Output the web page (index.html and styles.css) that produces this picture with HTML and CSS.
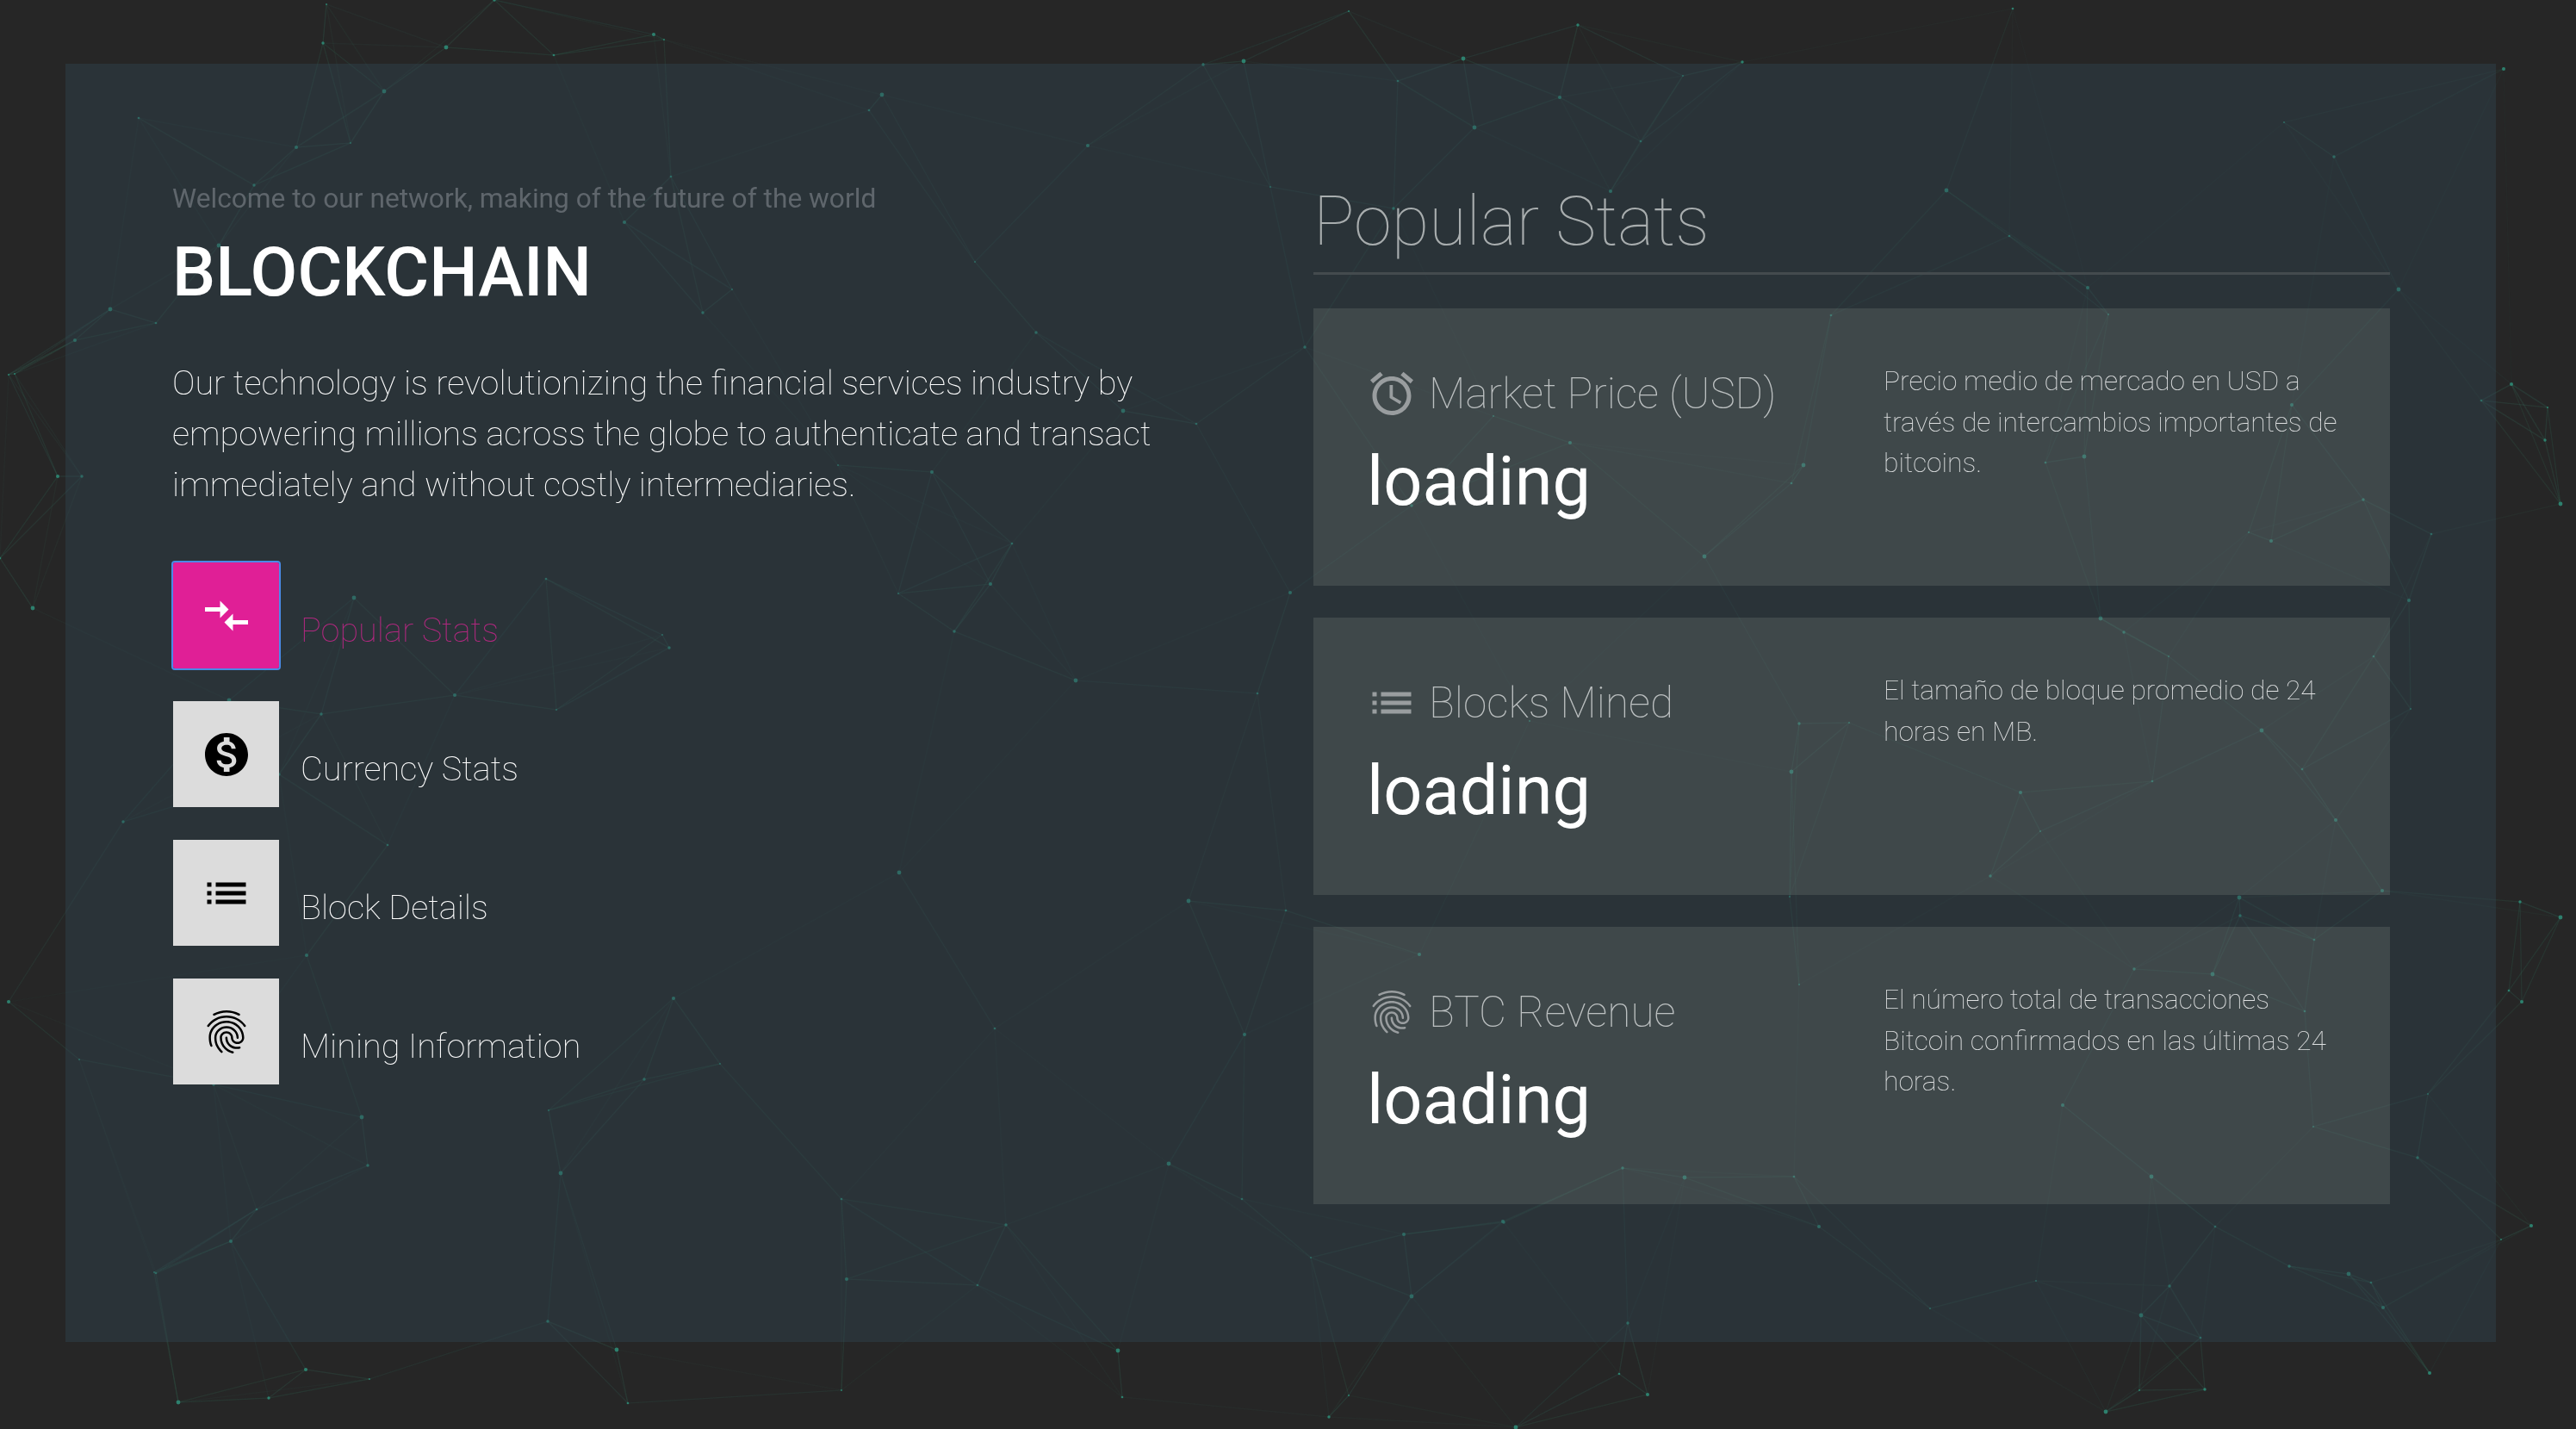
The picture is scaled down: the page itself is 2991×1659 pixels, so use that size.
FILE: index.html
```html
<!DOCTYPE html>
<html lang="en">
<head>
<meta charset="utf-8">
<title>Blockchain</title>
<link rel="stylesheet" href="styles.css">
</head>
<body>
<canvas id="network" class="network" width="2991" height="1659"></canvas>
<main class="frame">
  <section class="intro">
    <p class="welcome">Welcome to our network, making of the future of the world</p>
    <h1 class="brand">BLOCKCHAIN</h1>
    <p class="lead">Our technology is revolutionizing the financial services industry by empowering millions across the globe to authenticate and transact immediately and without costly intermediaries.</p>
    <nav class="tabs">
      <a class="tab tab-active">
        <span class="tab-icon"><svg class="icon flip" viewBox="0 0 24 24"><path d="M9.01 14H2v2h7.01v3L13 15l-3.99-4v3zm5.98-1v-3H22V8h-7.01V5L11 9l3.99 4z"/></svg></span>
        <span class="tab-label">Popular Stats</span>
      </a>
      <a class="tab">
        <span class="tab-icon"><svg class="icon" viewBox="0 0 24 24"><path d="M12 2C6.48 2 2 6.48 2 12s4.48 10 10 10 10-4.48 10-10S17.52 2 12 2zm1.41 16.09V20h-2.67v-1.93c-1.71-.36-3.16-1.46-3.27-3.4h1.96c.1 1.05.82 1.87 2.65 1.87 1.96 0 2.4-.98 2.4-1.59 0-.83-.44-1.61-2.67-2.14-2.48-.6-4.18-1.62-4.18-3.67 0-1.72 1.39-2.84 3.11-3.21V4h2.67v1.95c1.86.45 2.79 1.86 2.85 3.39H14.3c-.05-1.11-.64-1.87-2.22-1.87-1.5 0-2.4.68-2.4 1.64 0 .84.65 1.39 2.67 1.91s4.18 1.39 4.18 3.91c-.01 1.83-1.38 2.83-3.12 3.16z"/></svg></span>
        <span class="tab-label">Currency Stats</span>
      </a>
      <a class="tab">
        <span class="tab-icon"><svg class="icon" viewBox="0 0 24 24"><path d="M3 13h2v-2H3v2zm0 4h2v-2H3v2zm0-8h2V7H3v2zm4 4h14v-2H7v2zm0 4h14v-2H7v2zM7 7v2h14V7H7z"/></svg></span>
        <span class="tab-label">Block Details</span>
      </a>
      <a class="tab">
        <span class="tab-icon"><svg class="icon" viewBox="0 0 24 24"><path d="M17.81 4.47c-.08 0-.16-.02-.23-.06C15.66 3.42 14 3 12.01 3c-1.98 0-3.86.47-5.57 1.41-.24.13-.54.04-.68-.2-.13-.24-.04-.55.2-.68C7.82 2.52 9.86 2 12.01 2c2.13 0 3.99.47 6.03 1.52.25.13.34.43.21.67-.09.18-.26.28-.44.28zM3.5 9.72c-.1 0-.2-.03-.29-.09-.23-.16-.28-.47-.12-.7.99-1.4 2.25-2.5 3.75-3.27C9.98 4.04 14 4.03 17.15 5.65c1.5.77 2.76 1.86 3.75 3.25.16.22.11.54-.12.7-.23.16-.54.11-.7-.12-.9-1.26-2.04-2.25-3.39-2.94-2.87-1.47-6.54-1.47-9.4.01-1.36.7-2.5 1.7-3.4 2.96-.08.14-.23.21-.39.21zm6.25 12.07c-.13 0-.26-.05-.35-.15-.87-.87-1.34-1.43-2.01-2.64-.69-1.23-1.05-2.73-1.05-4.34 0-2.97 2.54-5.39 5.66-5.39s5.66 2.42 5.66 5.39c0 .28-.22.5-.5.5s-.5-.22-.5-.5c0-2.42-2.09-4.39-4.66-4.39-2.57 0-4.66 1.97-4.66 4.39 0 1.44.32 2.77.93 3.85.64 1.15 1.08 1.64 1.85 2.42.19.2.19.51 0 .71-.11.1-.24.15-.37.15zm7.17-1.85c-1.19 0-2.24-.3-3.1-.89-1.49-1.01-2.38-2.65-2.38-4.39 0-.28.22-.5.5-.5s.5.22.5.5c0 1.41.72 2.74 1.94 3.56.71.48 1.54.71 2.54.71.24 0 .64-.03 1.04-.1.27-.05.53.13.58.41.05.27-.13.53-.41.58-.57.11-1.07.12-1.21.12zM14.91 22c-.04 0-.09-.01-.13-.02-1.59-.44-2.63-1.03-3.72-2.1-1.4-1.39-2.17-3.24-2.17-5.22 0-1.62 1.38-2.94 3.08-2.94 1.7 0 3.08 1.32 3.08 2.94 0 1.07.93 1.94 2.08 1.94s2.08-.87 2.08-1.94c0-3.77-3.25-6.83-7.25-6.83-2.84 0-5.44 1.58-6.61 4.03-.39.81-.59 1.76-.59 2.8 0 .78.07 2.01.67 3.61.1.26-.03.55-.29.64-.26.1-.55-.04-.64-.29-.49-1.31-.73-2.61-.73-3.96 0-1.2.23-2.29.68-3.24 1.33-2.79 4.28-4.6 7.51-4.6 4.55 0 8.25 3.51 8.25 7.83 0 1.62-1.38 2.94-3.08 2.94s-3.08-1.32-3.08-2.94c0-1.07-.93-1.94-2.08-1.94s-2.08.87-2.08 1.94c0 1.71.66 3.31 1.87 4.51.95.94 1.86 1.46 3.27 1.85.27.07.42.35.35.61-.05.23-.26.38-.47.38z"/></svg></span>
        <span class="tab-label">Mining Information</span>
      </a>
    </nav>
  </section>
  <section class="stats">
    <h2 class="stats-title">Popular Stats</h2>
    <article class="card">
      <div class="card-main">
        <div class="card-head"><svg class="icon" viewBox="0 0 24 24"><path d="M22 5.72l-4.6-3.86-1.29 1.53 4.6 3.86L22 5.72zM7.88 3.39L6.6 1.86 2 5.71l1.29 1.53 4.59-3.85zM12.5 8H11v6l4.75 2.85.75-1.23-4-2.37V8zM12 4c-4.97 0-9 4.03-9 9s4.02 9 9 9c4.97 0 9-4.03 9-9s-4.03-9-9-9zm0 16c-3.87 0-7-3.13-7-7s3.13-7 7-7 7 3.13 7 7-3.13 7-7 7z"/></svg><span>Market Price (USD)</span></div>
        <div class="card-value">loading</div>
      </div>
      <p class="card-text">Precio medio de mercado en USD a través de intercambios importantes de bitcoins.</p>
    </article>
    <article class="card">
      <div class="card-main">
        <div class="card-head"><svg class="icon" viewBox="0 0 24 24"><path d="M3 13h2v-2H3v2zm0 4h2v-2H3v2zm0-8h2V7H3v2zm4 4h14v-2H7v2zm0 4h14v-2H7v2zM7 7v2h14V7H7z"/></svg><span>Blocks Mined</span></div>
        <div class="card-value">loading</div>
      </div>
      <p class="card-text">El tamaño de bloque promedio de 24 horas en MB.</p>
    </article>
    <article class="card">
      <div class="card-main">
        <div class="card-head"><svg class="icon" viewBox="0 0 24 24"><path d="M17.81 4.47c-.08 0-.16-.02-.23-.06C15.66 3.42 14 3 12.01 3c-1.98 0-3.86.47-5.57 1.41-.24.13-.54.04-.68-.2-.13-.24-.04-.55.2-.68C7.82 2.52 9.86 2 12.01 2c2.13 0 3.99.47 6.03 1.52.25.13.34.43.21.67-.09.18-.26.28-.44.28zM3.5 9.72c-.1 0-.2-.03-.29-.09-.23-.16-.28-.47-.12-.7.99-1.4 2.25-2.5 3.75-3.27C9.98 4.04 14 4.03 17.15 5.65c1.5.77 2.76 1.86 3.75 3.25.16.22.11.54-.12.7-.23.16-.54.11-.7-.12-.9-1.26-2.04-2.25-3.39-2.94-2.87-1.47-6.54-1.47-9.4.01-1.36.7-2.5 1.7-3.4 2.96-.08.14-.23.21-.39.21zm6.25 12.07c-.13 0-.26-.05-.35-.15-.87-.87-1.34-1.43-2.01-2.64-.69-1.23-1.05-2.73-1.05-4.34 0-2.97 2.54-5.39 5.66-5.39s5.66 2.42 5.66 5.39c0 .28-.22.5-.5.5s-.5-.22-.5-.5c0-2.42-2.09-4.39-4.66-4.39-2.57 0-4.66 1.97-4.66 4.39 0 1.44.32 2.77.93 3.85.64 1.15 1.08 1.64 1.85 2.42.19.2.19.51 0 .71-.11.1-.24.15-.37.15zm7.17-1.85c-1.19 0-2.24-.3-3.1-.89-1.49-1.01-2.38-2.65-2.38-4.39 0-.28.22-.5.5-.5s.5.22.5.5c0 1.41.72 2.74 1.94 3.56.71.48 1.54.71 2.54.71.24 0 .64-.03 1.04-.1.27-.05.53.13.58.41.05.27-.13.53-.41.58-.57.11-1.07.12-1.21.12zM14.91 22c-.04 0-.09-.01-.13-.02-1.59-.44-2.63-1.03-3.72-2.1-1.4-1.39-2.17-3.24-2.17-5.22 0-1.62 1.38-2.94 3.08-2.94 1.7 0 3.08 1.32 3.08 2.94 0 1.07.93 1.94 2.08 1.94s2.08-.87 2.08-1.94c0-3.77-3.25-6.83-7.25-6.83-2.84 0-5.44 1.58-6.61 4.03-.39.81-.59 1.76-.59 2.8 0 .78.07 2.01.67 3.61.1.26-.03.55-.29.64-.26.1-.55-.04-.64-.29-.49-1.31-.73-2.61-.73-3.96 0-1.2.23-2.29.68-3.24 1.33-2.79 4.28-4.6 7.51-4.6 4.55 0 8.25 3.51 8.25 7.83 0 1.62-1.38 2.94-3.08 2.94s-3.08-1.32-3.08-2.94c0-1.07-.93-1.94-2.08-1.94s-2.08.87-2.08 1.94c0 1.71.66 3.31 1.87 4.51.95.94 1.86 1.46 3.27 1.85.27.07.42.35.35.61-.05.23-.26.38-.47.38z"/></svg><span>BTC Revenue</span></div>
        <div class="card-value">loading</div>
      </div>
      <p class="card-text">El número total de transacciones Bitcoin confirmados en las últimas 24 horas.</p>
    </article>
  </section>
</main>
<script src="network.js"></script>
</body>
</html>
```
FILE: styles.css
```css
* { box-sizing: border-box; }
html, body { height: 100%; }
body {
  margin: 0;
  padding: 74px 93px 101px 76px;
  background: #262626;
  font-family: Roboto, "Liberation Sans", sans-serif;
  color: #fff;
  overflow: hidden;
}
.network { position: absolute; top: 0; left: 0; pointer-events: none; }
.frame {
  position: relative;
  height: 100%;
  display: grid;
  grid-template-columns: 1325px 1250px;
  padding: 0 123px 0 124px;
  background: rgba(49, 73, 84, .4);
}
.intro { padding-top: 132px; }
.welcome { margin: 0; font-size: 31.7px; line-height: 50px; color: #5f666c; font-weight: 400; }
.brand { margin: 12px 0 0; font-size: 79.5px; line-height: 96px; font-weight: 500; color: #fff; }
.lead { margin: 51px 0 0; width: 1170px; font-size: 39.66px; line-height: 59px; font-weight: 100; color: #fff; }
.tabs { display: flex; flex-direction: column; gap: 38px; margin-top: 61px; margin-left: 1px; }
.tab { display: flex; align-items: center; gap: 25px; height: 123px; }
.tab-icon { display: flex; align-items: center; justify-content: center; width: 123px; height: 123px; background: #dcdcdc; color: #000; flex: none; }
.tab-active .tab-icon { background: #e01f96; color: #fff; outline: 2px solid #4a8ae6; border-radius: 2px; }
.tab-label { padding-top: 33px; font-size: 39.66px; font-weight: 100; color: #fff; }
.tab-active .tab-label { color: #b0287f; }
.icon { width: 60px; height: 60px; fill: currentColor; flex: none; }
.flip { transform: scaleY(-1); }
.stats { display: flex; flex-direction: column; }
.stats-title { margin: 0 0 39px; padding: 135px 0 0; height: 245px; border-bottom: 3px solid #444b4e; font-size: 79.3px; line-height: 96px; font-weight: 100; color: #a8adae; }
.card {
  display: grid;
  grid-template-columns: 599px 1fr;
  height: 322px;
  margin-bottom: 37px;
  padding: 65px 40px 0 63px;
  background: rgba(255, 255, 240, .1);
}
.card-head { display: flex; align-items: center; gap: 13px; margin-top: 4px; margin-left: -2px; font-size: 49.5px; line-height: 60px; font-weight: 100; color: #bcc0c1; }
.card-head .icon { color: #999d9f; }
.card-value { margin-top: 24px; margin-left: -1px; font-size: 79.3px; line-height: 96px; font-weight: 400; color: #fff; }
.card-text { margin: -4px 0 0; font-size: 31.75px; line-height: 47.5px; font-weight: 100; color: #dfe1e2; }
```
FILE: network.js
```js
var nodes = [[379,5],[375,50],[518,55],[643,64],[759,40],[771,46],[574,0],[446,106],[161,137],[344,171],[407,166],[295,215],[254,285],[779,205],[725,258],[850,336],[816,363],[128,359],[181,375],[87,395],[17,434],[95,553],[1024,110],[1009,128],[1263,169],[1132,304],[1203,386],[1304,477],[1389,492],[1082,548],[973,540],[1397,75],
[411,694],[634,672],[528,807],[646,824],[373,829],[266,813],[450,981],[356,1109],[637,1289],[324,899],
[2260,221],[2333,274],[2424,334],[2448,365],[1515,403],[2094,540],[2080,561],[1823,514],[1734,483],[1639,587],[2420,530],[2375,537],[2637,628],[2611,618],[2744,580],[1979,646],[2126,366],[2661,470],
[2147,839],[2089,840],[2080,896],[2499,907],[2346,920],[2369,965],[2311,1017],[2626,848],[2673,893],[2712,952],[2518,762],[2466,734],[2439,718],[2756,762],[2766,1034],[2078,1041],[2601,1063],[2600,1042],[2687,1091],[1648,1108],[2089,1143],[2478,1125],[2569,1131],[2676,1174],[2395,1283],[2686,1308],[1884,1356],[1956,1367],[2083,1366],[1745,1418],[1776,837],
[427,1353],[651,1362],[298,1404],[268,1441],[179,1477],[636,1534],[716,1567],[729,1629],[355,1590],[429,1601],[312,1623],[207,1628],[977,1392],[983,1485],[977,1614],
[2807,1344],[2498,1366],[2572,1424],[2939,1423],[2904,1439],[2658,1470],[2727,1479],[2753,1489],[2767,1518],[2364,1487],[2519,1493],[2486,1527],[2555,1553],[2821,1594],[2484,1614],[2560,1613],[2445,1639],
[1175,631],[1150,678],[1043,689],[1108,733],[1249,790],[1460,805],[1498,688],[769,737],[777,752],[1044,1013],[1155,1194],[782,1159],[836,1235],[748,1253],[1380,1046],[1493,1057],[1445,1201],
[1566,13],[1832,29],[1699,68],[1623,94],[1811,113],[1954,88],[2023,72],[1712,148],[1905,164],[1870,222],[1475,217],[1618,242],[1444,71],[2337,10],[2907,80],[2652,142],[2710,182],[2785,336],
[2881,465],[2916,446],[2958,473],[2955,511],[2973,585],[2823,620],[2797,697],[2799,823],[2926,1047],[2973,1065],[2913,1150],[2928,1163],[2819,1270],
[1168,1422],[1357,1351],[1442,1392],[1630,1433],[1522,1460],[1746,1419],[1639,1505],[1135,1492],[2112,1424],[2241,1519],[1890,1536],[1298,1568],[1880,1595],[1913,1619],[1566,1620],[1543,1645],[1760,1657],[1303,1622],
[10,1163],[92,1230],[143,954],[38,706],[0,648],[67,553],[10,435],[248,1259],[420,1297],[181,1478]];

var ctx = document.getElementById("network").getContext("2d");
var i, j;
for (i = 0; i < nodes.length; i++) {
  var near = [];
  for (j = 0; j < nodes.length; j++) {
    if (i === j) continue;
    var dx = nodes[i][0] - nodes[j][0], dy = nodes[i][1] - nodes[j][1];
    near.push([Math.sqrt(dx * dx + dy * dy), j]);
  }
  near.sort(function (a, b) { return a[0] - b[0]; });
  for (j = 0; j < 4; j++) {
    if (near[j][0] > 380) break;
    var o = nodes[near[j][1]];
    ctx.strokeStyle = "rgba(60,125,105," + (0.11 * (1 - near[j][0] / 560)).toFixed(3) + ")";
    ctx.lineWidth = 1.5;
    ctx.beginPath();
    ctx.moveTo(nodes[i][0], nodes[i][1]);
    ctx.lineTo(o[0], o[1]);
    ctx.stroke();
  }
}
for (i = 0; i < nodes.length; i++) {
  ctx.fillStyle = "rgba(47,138,117,.9)";
  ctx.beginPath();
  ctx.arc(nodes[i][0], nodes[i][1], 1 + (i * 7 % 5) * 0.35, 0, Math.PI * 2);
  ctx.fill();
}
```
